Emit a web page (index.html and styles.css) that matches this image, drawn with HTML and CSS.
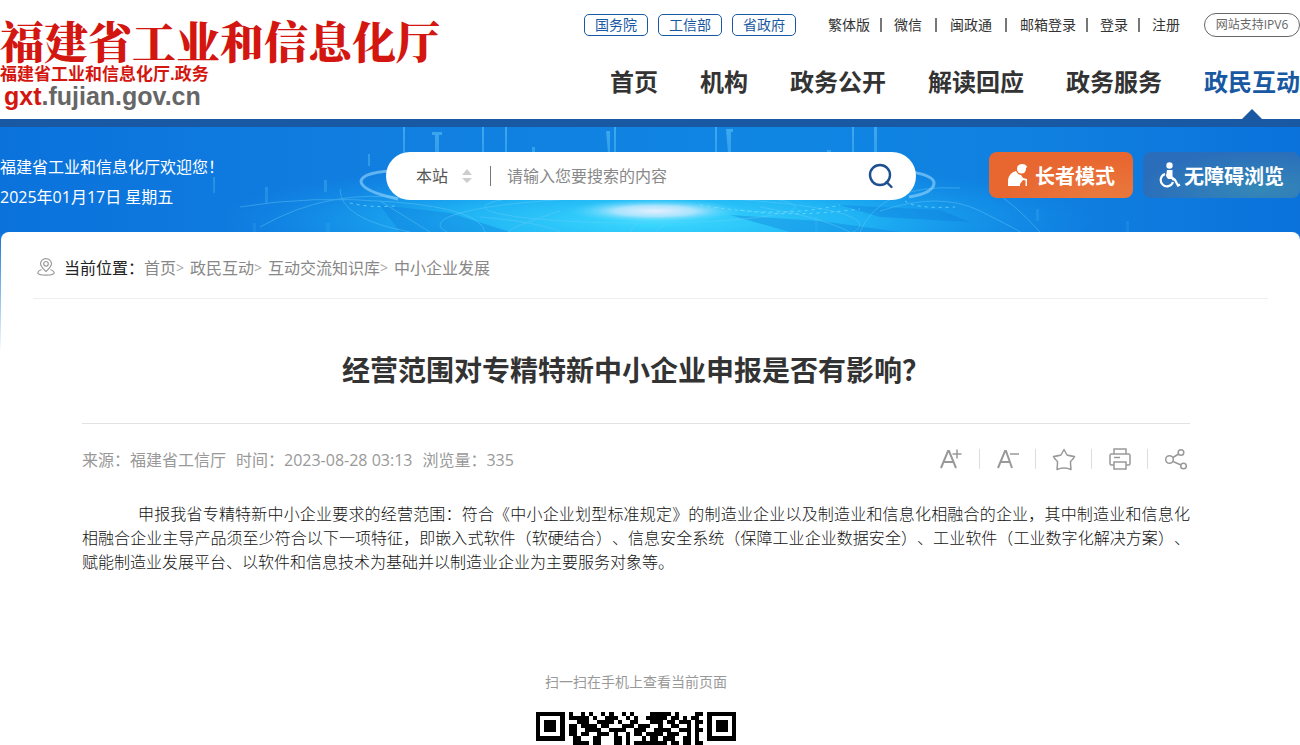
FILE: index.html
```html
<!DOCTYPE html>
<html lang="zh-CN">
<head>
<meta charset="utf-8">
<title>经营范围对专精特新中小企业申报是否有影响&#65311;</title>
<link rel="stylesheet" href="styles.css">
</head>
<body>
<header class="header">
  <div class="brand">
    <div class="brand-name">福建省工业和信息化厅</div>
    <div class="brand-sub">福建省工业和信息化厅.政务</div>
    <div class="brand-url"><span class="brand-host">gxt</span>.fujian.gov.cn</div>
  </div>
  <div class="header-side">
    <div class="topbar">
      <div class="gov-links">
        <a class="gov-link" href="#">国务院</a>
        <a class="gov-link" href="#">工信部</a>
        <a class="gov-link" href="#">省政府</a>
      </div>
      <div class="quick-links">
        <a class="quick-link" href="#">繁体版</a>
        <a class="quick-link wide" href="#">微信</a>
        <a class="quick-link wide" href="#">闽政通</a>
        <a class="quick-link" href="#">邮箱登录</a>
        <a class="quick-link" href="#">登录</a>
        <a class="quick-link" href="#">注册</a>
      </div>
      <span class="ipv6">网站支持IPV6</span>
    </div>
    <nav class="nav">
      <a class="nav-link" href="#">首页</a>
      <a class="nav-link" href="#">机构</a>
      <a class="nav-link" href="#">政务公开</a>
      <a class="nav-link" href="#">解读回应</a>
      <a class="nav-link" href="#">政务服务</a>
      <a class="nav-link active" href="#">政民互动</a>
    </nav>
  </div>
</header>

<section class="banner">
  <svg class="banner-art" viewBox="0 0 1300 105" preserveAspectRatio="none" aria-hidden="true">
    <defs>
      <radialGradient id="glow"><stop offset="0" stop-color="#3ddcff"/><stop offset=".45" stop-color="#23bdf8" stop-opacity=".85"/><stop offset="1" stop-color="#129af0" stop-opacity="0"/></radialGradient>
      <radialGradient id="core"><stop offset="0" stop-color="#e4efff"/><stop offset=".45" stop-color="#b6e6fd" stop-opacity=".9"/><stop offset="1" stop-color="#45d4fb" stop-opacity="0"/></radialGradient>
      <linearGradient id="beam" x1="0" y1="0" x2="0" y2="1"><stop offset="0" stop-color="#6fd0fb" stop-opacity=".8"/><stop offset="1" stop-color="#4fc3fa" stop-opacity=".2"/></linearGradient>
    </defs>
    <ellipse cx="655" cy="94" rx="440" ry="62" fill="url(#glow)"/>
    <g fill="#0b78da" opacity=".35">
      <path d="M380 78l70 8 60 19H400zM730 88l90 6 80 11H790zM840 78l100 5 30 12-90-5z"/>
    </g>
    <g fill="none" stroke="#6ccffb" opacity=".4">
      <ellipse cx="640" cy="80" rx="155" ry="16"/>
      <ellipse cx="650" cy="98" rx="210" ry="28"/>
      <path d="M240 80q70-12 155-5t90 30M260 100q70-40 150-28M340 62q0 30 70 43M380 74l50 31M880 84q60-20 100 0t40 21M860 105q20-48 100-44M990 62q25 15 50 43M760 80q60 10 90 25M480 90q60 5 80 15M560 84q-60 20-50 21M680 78q-40 10-50 27M720 80q-50 10-65 25"/>
    </g>
    <g fill="none" stroke="#8fd1fb" stroke-width="3" opacity=".65">
      <path d="M389 44q-26 2-28 10 0 10 37 18M906 44q28 4 28 12 0 10-25 14"/>
    </g>
    <g fill="url(#beam)" opacity=".6">
      <path d="M403 0h2v26h-2zM432 5h10v3h-3v18h-4V8h-3zM482 0h2v26h-2zM505 0h2v26h-2zM532 20h3v8h-3zM606 4h4v22h-2zM614 0h2v26h-2zM715 0h2v26h-2zM726 2h7v3h-2v21h-3zM827 23h4v6h-4zM852 0h2v26h-2zM874 0h3v34h-3zM213 50h2v16h-2zM265 60h3v16h-3zM324 53h3v12h-3zM368 27h2v12h-2zM253 96h3v9h-3zM326 96h4v9h-4zM815 90h3v15h-3zM1036 82h3v12h-3zM1126 94h3v11h-3z"/>
    </g>
    <ellipse cx="655" cy="84" rx="88" ry="12" fill="url(#core)"/>
    <g fill="none" stroke="#7fe0ff" stroke-dasharray="3 4" opacity=".7"><path d="M350 76q20 5 45 3M700 78q80 14 140 0M740 83q50 8 120-1M905 74q10 8 50 6"/></g>
  </svg>
  <div class="banner-row">
    <div class="welcome">
      <div>福建省工业和信息化厅欢迎您&#65281;</div>
      <div>2025年01月17日 星期五</div>
    </div>
    <form class="search">
      <div class="scope">
        <select class="scope-select" aria-label="搜索范围"><option>本站</option></select>
        <svg class="scope-arrows" viewBox="0 0 10 16" aria-hidden="true"><path d="M5 1l5 6H0zM5 15L0 10h10z" fill="#cdcdcd"/></svg>
      </div>
      <input class="search-input" type="text" placeholder="请输入您要搜索的内容" aria-label="搜索内容">
      <button class="search-button" type="button" aria-label="搜索">
        <svg width="26" height="26" viewBox="0 0 26 26" fill="none" stroke="#1d4f91" stroke-width="2.4" stroke-linecap="round"><circle cx="12" cy="12" r="10"/><path d="M18.500 19l5 5"/></svg>
      </button>
    </form>
    <div class="modes">
      <button class="mode elder" type="button">
        <svg width="22" height="24" viewBox="0 0 22 24" fill="#fff" aria-hidden="true"><circle cx="14.500" cy="6" r="4.500"/><path d="M10 4q3-4.500 8-2.500l2.500 2.500-2 1zM9 8q2 4 5 4l2 3 4 1v7h-1.500v-5.500l-2.500-.5-3 4v2H1v-6q1-7 8-9z"/></svg>
        <span>长者模式</span>
      </button>
      <button class="mode barrier" type="button">
        <svg width="22" height="26" viewBox="0 0 22 26" aria-hidden="true"><circle cx="10.500" cy="3.500" r="3.200" fill="#fff"/><path d="M8 8h5.500v6.500l3 2.500H9l-2-3z" fill="#fff"/><path d="M6 12a6.300 6.300 0 1 0 8 8M13 17l3 1 3 5.500 2-1" fill="none" stroke="#fff" stroke-width="2.200"/></svg>
        <span>无障碍浏览</span>
      </button>
    </div>
  </div>
</section>

<div class="backdrop">
<main class="panel">
  <div class="crumbs">
    <svg class="crumb-icon" viewBox="0 0 18 18" fill="none" stroke="#999" stroke-width="1.200" aria-hidden="true"><path d="M9 13.500Q3.500 8.500 3.500 5.800a5.500 5.200 0 0 1 11 0Q14.500 8.500 9 13.500z"/><circle cx="9" cy="5.800" r="2.300"/><path d="M4.500 11.500Q1 13 .8 14.500C.8 16.500 4 17.200 9 17.200s8.200-.7 8.200-2.700Q17 13 13.500 11.500"/></svg>
    <span class="crumb-label">当前位置&#65306;</span>
    <a class="crumb" href="#">首页</a><span class="crumb-sep">&gt;</span>
    <a class="crumb" href="#">政民互动</a><span class="crumb-sep">&gt;</span>
    <a class="crumb" href="#">互动交流知识库</a><span class="crumb-sep">&gt;</span>
    <a class="crumb" href="#">中小企业发展</a>
  </div>
  <article class="article">
    <h1 class="title">经营范围对专精特新中小企业申报是否有影响&#65311;</h1>
    <div class="meta">
      <div class="facts">
        <span>来源&#65306;福建省工信厅</span>
        <span>时间&#65306;2023-08-28 03:13</span>
        <span>浏览量&#65306;335</span>
      </div>
      <div class="tools">
        <button class="tool" type="button" aria-label="放大字体"><svg viewBox="0 0 24 24"><path d="M2 21L9 4h1l7 17M4.800 15h9.500" stroke-width="2"/><path d="M13.500 7h9M18 2.500v9"/></svg></button>
        <button class="tool" type="button" aria-label="缩小字体"><svg viewBox="0 0 24 24"><path d="M2 21L9 4h1l6 17M4.800 15h9" stroke-width="2"/><path d="M14 7h9"/></svg></button>
        <button class="tool" type="button" aria-label="收藏"><svg viewBox="0 0 24 24" stroke-linejoin="round"><path d="M12 2.500l3 5.500Q18.500 9 22.500 9.500 22 11 18.500 14.500q0 4 .5 8-3-1.500-7-1.500t-7 1.500q.5-4 .5-8Q2 11 1.500 9.500 5.500 9 9 8z"/></svg></button>
        <button class="tool" type="button" aria-label="打印"><svg viewBox="0 0 24 24"><path d="M6 7V2h12v5M6 18H3.500Q2 18 2 16.500v-8Q2 7 3.500 7h17Q22 7 22 8.500v8q0 1.500-1.500 1.500H18M6 15h12v7H6zM6 10.500h6"/></svg></button>
        <button class="tool" type="button" aria-label="分享"><svg viewBox="0 0 24 24"><circle cx="5.500" cy="12.500" r="3.800"/><circle cx="17" cy="5.500" r="2.800"/><circle cx="19.500" cy="19" r="2.800"/><path d="M9 10.500l5.500-3.500M9 14.500l8 3.500"/></svg></button>
      </div>
    </div>
    <p class="text">申报我省专精特新中小企业要求的经营范围&#65306;符合《中小企业划型标准规定》的制造业企业以及制造业和信息化相融合的企业&#65292;其中制造业和信息化相融合企业主导产品须至少符合以下一项特征&#65292;即嵌入式软件&#65288;软硬结合&#65289;、信息安全系统&#65288;保障工业企业数据安全&#65289;、工业软件&#65288;工业数字化解决方案&#65289;、赋能制造业发展平台、以软件和信息技术为基础并以制造业企业为主要服务对象等。</p>
    <div class="scan">
      <div class="scan-label">扫一扫在手机上查看当前页面</div>
      <svg class="qr" id="qr" viewBox="0 0 49 49" shape-rendering="crispEdges" role="img" aria-label="二维码"></svg>
    </div>
  </article>
</main>
</div>
<script src="qr.js"></script>
</body>
</html>
```
FILE: qr.js
```js
// Modules between the two upper finder patterns, columns 8 to 40.
const rows = [
  "100101001010010100001111101000011",
  "111110100111001010011111011010110",
  "001110011110100110001110110111011",
  "110111101100011101110010011001010",
  "110011110011110011100111100111011",
  "110110011101001011011110111001010",
  "011000110001101000101101110011010",
  "011110110001101011111111011011011"
];
const finder = ["1111111", "1000001", "1011101", "1011101", "1011101", "1000001", "1111111"];
let d = "";
const plot = (line, x, y) => {
  for (const run of line.matchAll(/1+/g)) {
    d += `M${x + run.index} ${y}h${run[0].length}v1h-${run[0].length}z`;
  }
};
rows.forEach((line, y) => plot(line, 8, y));
rows.concat(rows, rows, rows, rows).slice(0, 41).forEach((line, y) => plot(line, 8, y + 8));
finder.forEach((line, y) => {
  plot(line, 0, y);
  plot(line, 42, y);
  plot(line, 0, y + 42);
});
const path = document.createElementNS("http://www.w3.org/2000/svg", "path");
path.setAttribute("d", d);
document.getElementById("qr").append(path);
```
FILE: styles.css
```css
* { box-sizing: border-box; }
body {
  margin: 0;
  font-family: "Open Sans", "Noto Sans CJK SC", sans-serif;
  font-size: 16px;
  color: #333;
  background: #fff;
  text-spacing-trim: space-all;
  overflow-x: hidden;
}
a { color: inherit; text-decoration: none; }
button { border: 0; padding: 0; background: none; font: inherit; cursor: pointer; }

.header {
  display: flex;
  justify-content: space-between;
  height: 119px;
}
.brand { padding-top: 15px; white-space: nowrap; }
.brand-name {
  font-family: "Noto Serif CJK SC", "Noto Sans CJK SC", serif;
  font-size: 44px;
  font-weight: 900;
  line-height: 50px;
  color: #d3160f;
}
.brand-sub {
  font-family: "Liberation Sans", "Noto Sans CJK SC", sans-serif;
  font-size: 17px;
  font-weight: 700;
  line-height: 20px;
  color: #d3160f;
}
.brand-url {
  padding-left: 4px;
  font-family: "Liberation Sans", sans-serif;
  font-size: 25px;
  line-height: 22px;
  font-weight: 700;
  color: #666;
}
.brand-host { color: #d3160f; }

.header-side {
  display: flex;
  flex-direction: column;
  justify-content: space-between;
  padding-top: 13px;
}
.topbar { display: flex; align-items: center; height: 24px; font-size: 14px; white-space: nowrap; }
.gov-links { display: flex; gap: 10px; margin: 0 32px 0 -26px; }
.gov-link {
  width: 64px;
  border: 1px solid #1958a2;
  border-radius: 5px;
  line-height: 20px;
  text-align: center;
  color: #1958a2;
}
.quick-links { display: flex; align-items: center; margin-right: auto; }
.quick-link { display: flex; align-items: center; line-height: 24px; }
.quick-link::after { content: ""; width: 2px; height: 14px; margin: 0 12px 0 10px; background: #777; }
.quick-link.wide::after { margin: 0 13px; }
.quick-link:last-child::after { display: none; }
.ipv6 {
  width: 96px;
  border: 1px solid #666;
  border-radius: 12px;
  font-size: 12px;
  line-height: 22px;
  text-align: center;
  color: #666;
}
.nav { display: flex; gap: 42px; font-size: 24px; font-weight: 700; line-height: 74px; white-space: nowrap; }
.nav-link { position: relative; }
.nav-link.active { color: #1958a2; }
.nav-link.active::after {
  content: "";
  position: absolute;
  left: calc(50% - 10px);
  bottom: 0;
  border: 10px solid transparent;
  border-top-width: 0;
  border-bottom-color: #1958a2;
}

.banner {
  position: relative;
  border-top: 8px solid #1958a2;
  background: linear-gradient(90deg, #0b72dc 0%, #117fe0 30%, #1086e3 60%, #1080e0 80%, #0b72dc 100%);
}
.banner-art { position: absolute; inset: 0; width: 100%; height: 100%; }
.banner-row {
  position: relative;
  display: grid;
  grid-template-columns: 386px minmax(300px, 530px) 1fr;
  align-items: start;
  padding: 25px 0 20px;
}
.welcome { line-height: 30px; color: #fff; white-space: nowrap; }
.search { display: flex; align-items: center; height: 48px; border-radius: 24px; background: #fff; padding: 0 22px 0 30px; }
.scope { display: flex; align-items: center; justify-content: space-between; width: 75px; height: 20px; border-right: 1px solid #777; padding-right: 18px; }
.scope-select { appearance: none; border: 0; padding: 0; width: 34px; background: none; font: inherit; color: #555; }
.scope-arrows { width: 10px; height: 16px; }
.search-input { flex: 1; min-width: 0; border: 0; outline: 0; padding: 0 16px; background: none; font: inherit; color: #333; }
.search-input::placeholder { color: #888; }
.search-button { display: flex; }
.modes { display: flex; justify-content: flex-end; gap: 10px; }
.mode {
  display: flex;
  align-items: center;
  justify-content: center;
  gap: 6px;
  width: 144px;
  height: 46px;
  border-radius: 8px;
  font-size: 20px;
  font-weight: 700;
  color: #fff;
  white-space: nowrap;
}
.mode svg { flex: none; }
.elder { background: radial-gradient(ellipse at 80% 100%, #ea7a3e, #e86730 60%); }
.barrier { width: 157px; gap: 3px; background: radial-gradient(ellipse at 75% 80%, #3488b8, #2a6dbb 75%); }

.backdrop { background: linear-gradient(#0b72dc, #fff 120px); }
.panel { margin-left: 1px; padding: 0 32px; border-radius: 8px 8px 0 0; background: #fff; }
.crumbs {
  display: flex;
  align-items: center;
  height: 67px;
  padding: 4px 5px 0 4px;
  border-bottom: 1px solid #eee;
  color: #888;
  white-space: nowrap;
}
.crumb-icon { width: 18px; height: 18px; margin-right: 9px; }
.crumb-label { color: #222; }
.crumb-sep { margin-right: 6px; font-size: 14px; color: #aaa; }

.article { padding: 0 78px 0 49px; }
.title {
  margin: 0;
  padding: 50px 0 32px;
  border-bottom: 1px solid #e2e2e2;
  font-size: 28px;
  line-height: 42px;
  text-align: center;
  color: #333;
}
.meta { display: flex; justify-content: space-between; align-items: center; height: 70px; color: #999; }
.facts { display: flex; gap: 10px; white-space: nowrap; }
.tools { display: flex; }
.tool { display: flex; align-items: center; justify-content: center; width: 56px; height: 20px; border-left: 1px solid #ddd; }
.tool:first-child { border-left: 0; }
.tool:last-child { width: 43px; padding-right: 2px; justify-content: flex-end; }
.tool svg { width: 24px; height: 24px; fill: none; stroke: #999; stroke-width: 1.5; }
.text {
  margin: 0;
  padding-top: 7px;
  text-indent: 56px;
  text-align: justify;
  line-height: 24px;
  font-family: "Noto Sans CJK SC", sans-serif;
  font-weight: 300;
  color: #111;
}
.scan { display: flex; flex-direction: column; align-items: center; gap: 20px; padding-top: 99px; }
.scan-label { font-size: 14px; line-height: 20px; color: #999; }
.qr { width: 200px; height: 200px; }
```
